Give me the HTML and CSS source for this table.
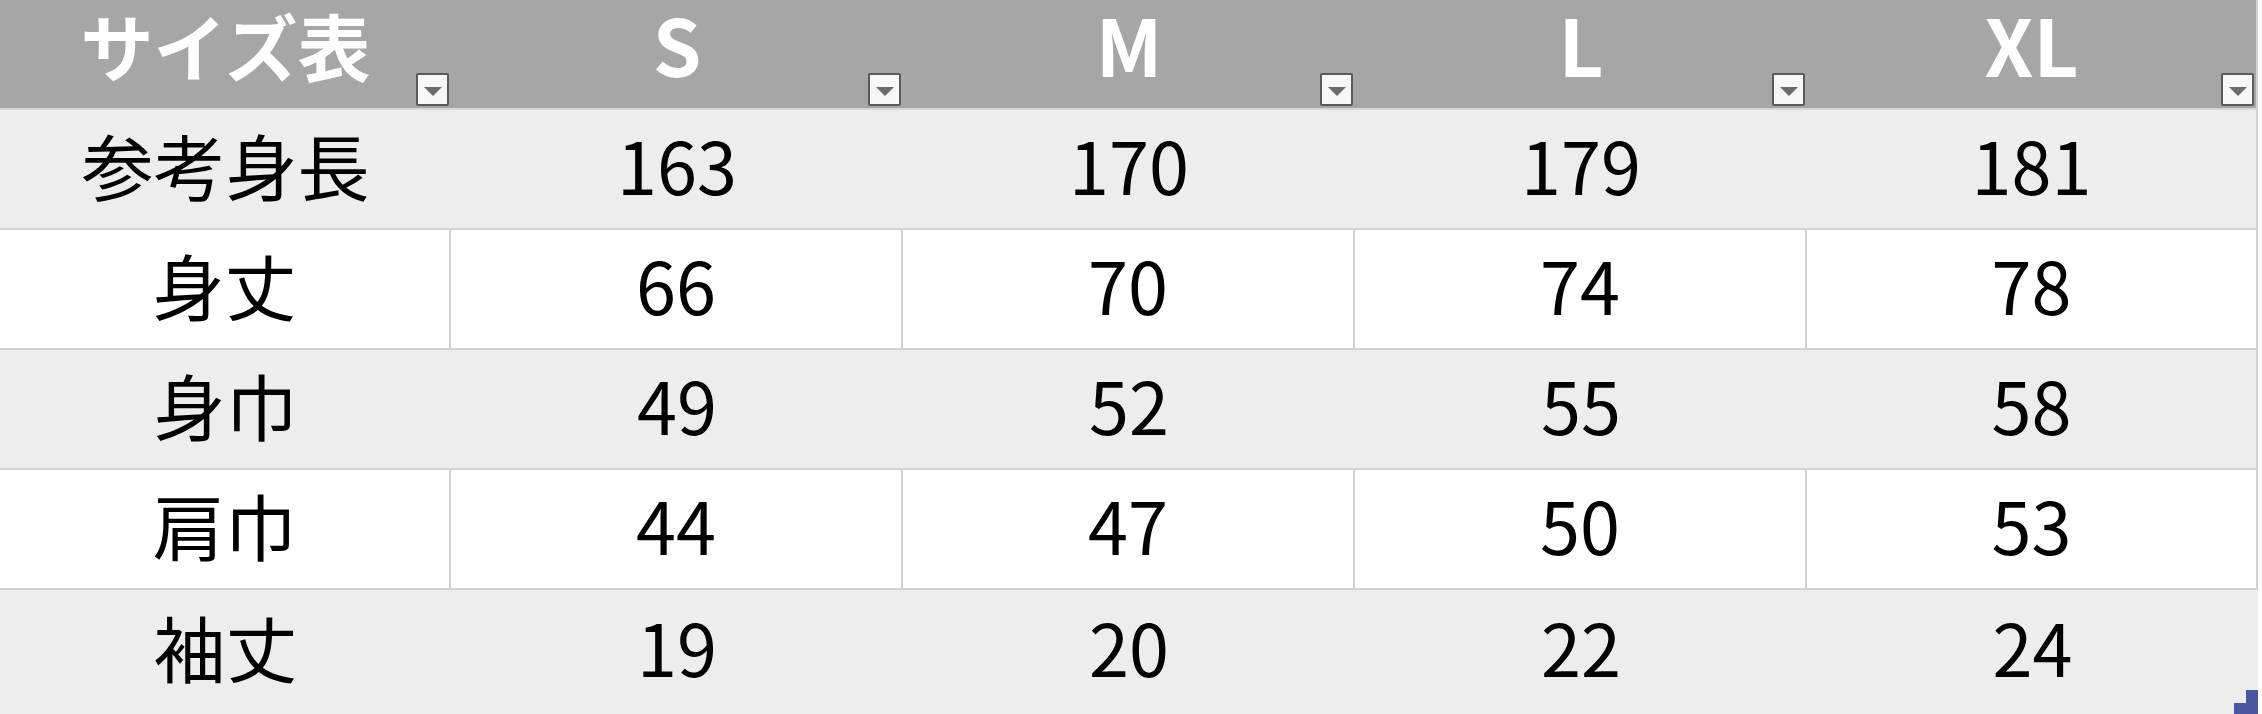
FILE: index.html
```html
<!DOCTYPE html>
<html lang="ja">
<head>
<meta charset="utf-8">
<title>サイズ表</title>
<link rel="stylesheet" href="styles.css">
</head>
<body>
<div class="sheet">
  <div class="row head">
    <div class="cell"><span class="jp">サイズ表</span><span class="dd"><svg width="18" height="9" viewBox="0 0 18 9"><polygon points="0,0 18,0 9,9" fill="#6b6b6b"/></svg></span></div>
    <div class="cell"><span class="lat">S</span><span class="dd"><svg width="18" height="9" viewBox="0 0 18 9"><polygon points="0,0 18,0 9,9" fill="#6b6b6b"/></svg></span></div>
    <div class="cell"><span class="lat">M</span><span class="dd"><svg width="18" height="9" viewBox="0 0 18 9"><polygon points="0,0 18,0 9,9" fill="#6b6b6b"/></svg></span></div>
    <div class="cell"><span class="lat">L</span><span class="dd"><svg width="18" height="9" viewBox="0 0 18 9"><polygon points="0,0 18,0 9,9" fill="#6b6b6b"/></svg></span></div>
    <div class="cell"><span class="lat">XL</span><span class="dd"><svg width="18" height="9" viewBox="0 0 18 9"><polygon points="0,0 18,0 9,9" fill="#6b6b6b"/></svg></span></div>
  </div>
  <div class="row band">
    <div class="cell">参考身長</div><div class="cell">163</div><div class="cell">170</div><div class="cell">179</div><div class="cell">181</div>
  </div>
  <div class="row plain">
    <div class="cell">身丈</div><div class="cell">66</div><div class="cell">70</div><div class="cell">74</div><div class="cell">78</div>
  </div>
  <div class="row band">
    <div class="cell">身巾</div><div class="cell">49</div><div class="cell">52</div><div class="cell">55</div><div class="cell">58</div>
  </div>
  <div class="row plain">
    <div class="cell">肩巾</div><div class="cell">44</div><div class="cell">47</div><div class="cell">50</div><div class="cell">53</div>
  </div>
  <div class="row band last">
    <div class="cell">袖丈</div><div class="cell">19</div><div class="cell">20</div><div class="cell">22</div><div class="cell">24</div>
    <svg class="handle" width="24" height="24" viewBox="0 0 24 24"><polygon points="12,0 24,0 24,24 0,24 0,13 12,13" fill="#4b55a0"/></svg>
  </div>
</div>
</body>
</html>
```
FILE: styles.css
```css
html, body {
  margin: 0;
  padding: 0;
  background: #ffffff;
}
body {
  width: 2262px;
  height: 714px;
  overflow: hidden;
  font-family: "Noto Sans CJK JP", "Noto Sans", sans-serif;
  color: #000;
}
.sheet {
  width: 2258px;
  display: flex;
  flex-direction: column;
}
.row {
  display: grid;
  grid-template-columns: 451px 452px 452px 452px 451px;
  height: 120px;
  box-sizing: border-box;
  border-bottom: 2px solid #d2d2d2;
  position: relative;
}
.head {
  height: 110px;
  background: #a6a6a6;
  border-bottom-color: #d6d6d6;
}
.band { background: #ededed; }
.plain { background: #ffffff; }
.last { height: 124px; border-bottom: none; }
.cell {
  display: flex;
  align-items: center;
  justify-content: center;
  font-size: 72px;
  line-height: 1.3;
  position: relative;
  box-sizing: border-box;
  padding-bottom: 10px;
}
.plain .cell { border-right: 2px solid #d2d2d2; }
.band .cell:last-child,
.head .cell:last-child { border-right: 2px solid #d2d2d2; }
.head .cell {
  color: #ffffff;
  font-weight: 700;
  padding-bottom: 20px;
}
.head .jp,
.head .lat {
  display: block;
  line-height: 1.05;
}
.head .jp { font-size: 73px; }
.head .lat { font-size: 78px; }
.last .cell { padding-bottom: 12px; }
.dd {
  position: absolute;
  right: 2px;
  bottom: 2px;
  width: 33px;
  height: 33px;
  box-sizing: border-box;
  border: 2px solid #5a5a5a;
  border-radius: 2px;
  background: #f7f7f7;
  display: flex;
  justify-content: center;
  padding-top: 12px;
  line-height: 1;
}
.dd svg { display: block; }
.handle {
  position: absolute;
  right: 0;
  bottom: 0;
}
```
